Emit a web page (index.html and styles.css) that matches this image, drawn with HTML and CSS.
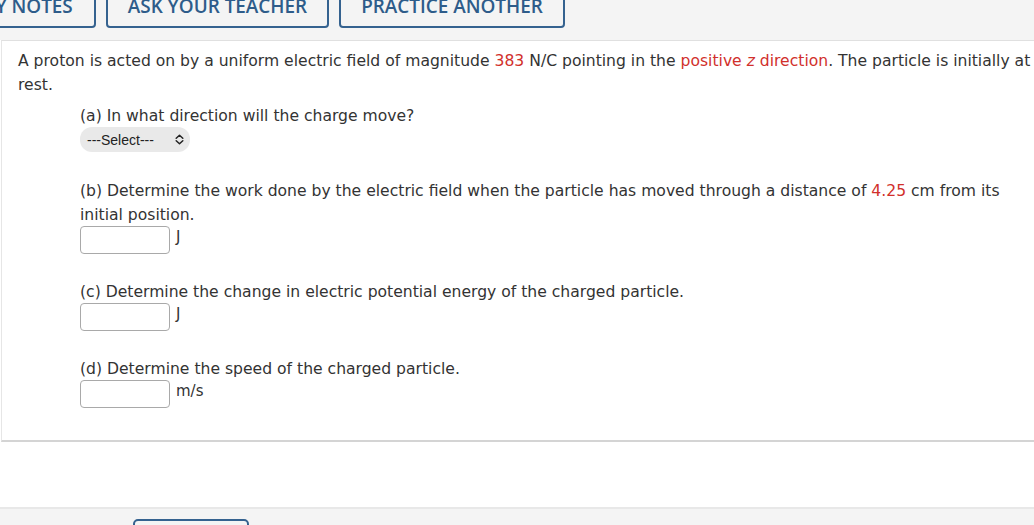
FILE: index.html
```html
<!DOCTYPE html>
<html>
<head>
<meta charset="utf-8">
<link rel="stylesheet" href="styles.css">
</head>
<body>
<div class="toolbar">
  <button class="tbtn first">MY NOTES</button>
  <button class="tbtn">ASK YOUR TEACHER</button>
  <button class="tbtn">PRACTICE ANOTHER</button>
</div>
<div class="panel">
  <p class="intro">A proton is acted on by a uniform electric field of magnitude <span class="red">383</span> N/C pointing in the <span class="red">positive <i>z</i> direction</span>. The particle is initially at rest.</p>
  <div class="part">
    <p>(a) In what direction will the charge move?</p>
    <div class="select">---Select---
      <svg class="chev" width="9" height="11" viewBox="0 0 9 11"><path d="M1.2 4.2 L4.5 1.2 L7.8 4.2 M1.2 6.8 L4.5 9.8 L7.8 6.8" fill="none" stroke="#222" stroke-width="1.5" stroke-linecap="round" stroke-linejoin="round"/></svg>
    </div>
  </div>
  <div class="part">
    <p>(b) Determine the work done by the electric field when the particle has moved through a distance of <span class="red">4.25</span> cm from its initial position.</p>
    <div class="answer"><span class="box"></span><span class="unit">J</span></div>
  </div>
  <div class="part">
    <p>(c) Determine the change in electric potential energy of the charged particle.</p>
    <div class="answer"><span class="box"></span><span class="unit">J</span></div>
  </div>
  <div class="part">
    <p>(d) Determine the speed of the charged particle.</p>
    <div class="answer"><span class="box"></span><span class="unit">m/s</span></div>
  </div>
</div>
<div class="spacer"></div>
<div class="footer">
  <button class="fbtn"></button>
</div>
</body>
</html>
```
FILE: styles.css
```css
html, body {
  margin: 0;
  padding: 0;
  background: #ffffff;
}
body {
  width: 1034px;
  height: 525px;
  overflow: hidden;
  font-family: "DejaVu Sans", Verdana, sans-serif;
  color: #333333;
}
.toolbar {
  height: 40px;
  background: #f4f4f4;
  display: flex;
  align-items: flex-end;
  gap: 10px;
  padding-bottom: 12px;
  box-sizing: border-box;
  overflow: hidden;
}
.tbtn {
  flex: none;
  height: 46px;
  padding: 0 20px 7px;
  display: flex;
  align-items: flex-end;
  justify-content: center;
  background: #f4f4f4;
  border: 2px solid #35628f;
  border-radius: 4px;
  font-family: "Open Sans", sans-serif;
  font-weight: 600;
  font-size: 18.9px;
  color: #2e5c8a;
  white-space: nowrap;
}
.tbtn.first {
  margin-left: -44px;
  padding-right: 21px;
}
.panel {
  background: #ffffff;
  border-top: 1px solid #e0e0e0;
  border-left: 1px solid #e6e6e6;
  border-bottom: 2px solid #d4d4d4;
  margin-left: 1px;
  height: 402px;
  box-sizing: border-box;
  padding: 8px 0 0 16px;
  font-size: 15.6px;
  line-height: 24px;
}
.panel p {
  margin: 0;
}
.intro {
  margin-bottom: 7px !important;
}
.red {
  color: #d1302c;
}
.part {
  display: flex;
  flex-direction: column;
  align-items: flex-start;
  padding-left: 62px;
  margin-bottom: 26px;
  padding-right: 20px;
}
.select {
  margin-top: -1px;
  width: 110px;
  height: 25px;
  box-sizing: border-box;
  border-radius: 12px;
  background: #e9e9e9;
  display: flex;
  align-items: center;
  justify-content: space-between;
  padding: 0 6px 0 7px;
  font-family: "Liberation Sans", Arial, sans-serif;
  font-size: 14px;
  color: #222;
  margin-bottom: 1px;
}
.chev {
  display: block;
}
.answer {
  display: flex;
  align-items: center;
  gap: 6px;
  margin-top: -1px;
}
.box {
  width: 90px;
  height: 28px;
  box-sizing: border-box;
  border: 1px solid #a9a9a9;
  border-radius: 4px;
  background: #fff;
}
.unit {
  font-size: 15px;
  line-height: 20px;
  margin-top: -6px;
}
.spacer {
  height: 65px;
  background: #ffffff;
}
.footer {
  border-top: 2px solid #e8e8e8;
  background: #f4f4f4;
  height: 40px;
  padding-left: 133px;
}
.fbtn {
  display: block;
  margin-top: 10px;
  width: 116px;
  height: 30px;
  border: 2px solid #35628f;
  border-radius: 5px;
  background: #f4f4f4;
}
```
